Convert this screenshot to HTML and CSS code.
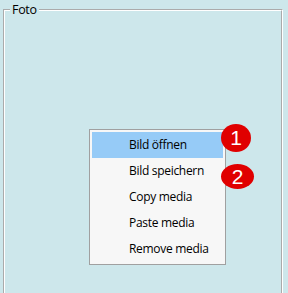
FILE: index.html
```html
<!DOCTYPE html>
<html lang="de">
<head>
  <meta charset="UTF-8">
  <title>Foto</title>
  <link rel="stylesheet" href="styles.css">
</head>
<body>

  <!-- GROUP BOX -->
  <fieldset class="group">
    <legend>Foto</legend>
  </fieldset>

  <!-- CONTEXT MENU -->
  <ul class="menu">
    <li class="active">Bild öffnen</li>
    <li>Bild speichern</li>
    <li>Copy media</li>
    <li>Paste media</li>
    <li>Remove media</li>
  </ul>

  <span class="badge badge-1">1</span>
  <span class="badge badge-2">2</span>

</body>
</html>
```

FILE: styles.css
```css
* {
  margin: 0;
  padding: 0;
  box-sizing: border-box;
}
html, body {
  width: 288px;
  height: 293px;
  overflow: hidden;
}
body {
  background: #cde7eb;
  font-family: 'Open Sans', 'Liberation Sans', sans-serif;
  font-size: 12px;
  color: #000;
  position: relative;
}

/* ===== GROUP BOX ===== */
.group {
  margin: 2px 0 0 3px;
  width: 280px;
  height: 291px;
  border: 2px groove #fff;
  border-bottom: none;
  padding: 0 6px;
}
.group legend {
  padding: 0 2px;
  margin-left: -1px;
  line-height: 15px;
  font-size: 12.5px;
  letter-spacing: -0.3px;
}

/* ===== CONTEXT MENU ===== */
.menu {
  position: absolute;
  left: 89px;
  top: 129px;
  width: 137px;
  list-style: none;
  background: #f7f7f7;
  border: 1px solid #a0a0a0;
  padding: 2px;
}
.menu li {
  height: 26px;
  line-height: 26px;
  padding-left: 37px;
  white-space: nowrap;
  letter-spacing: -0.3px;
}
.menu li.active {
  background: #96cbf7;
}

/* ===== NUMBER BADGES ===== */
.badge {
  position: absolute;
  display: flex;
  align-items: center;
  justify-content: center;
  background: #e00000;
  color: #fff;
  font-family: 'Liberation Sans', sans-serif;
  font-size: 21px;
  border-radius: 50%;
}
.badge-1 {
  left: 221px;
  top: 124px;
  width: 30px;
  height: 28px;
}
.badge-2 {
  left: 221px;
  top: 164px;
  width: 33px;
  height: 25px;
}
```
